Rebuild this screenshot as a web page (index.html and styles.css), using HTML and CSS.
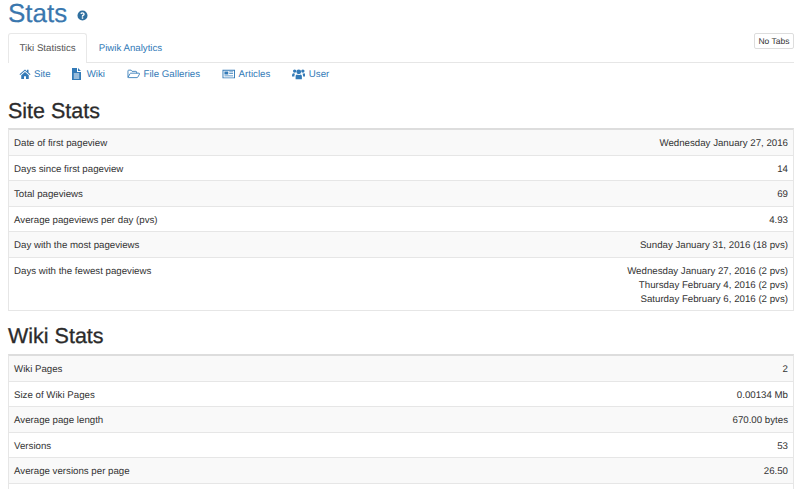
FILE: index.html
```html
<!DOCTYPE html>
<html lang="en">
<head>
<meta charset="utf-8">
<title>Stats</title>
<link rel="stylesheet" href="styles.css">
</head>
<body>
<div class="page">
  <h1 class="title">Stats
    <svg class="help" viewBox="0 0 24 24" aria-hidden="true"><path fill-rule="evenodd" d="M12 1a11 11 0 1 0 0 22 11 11 0 0 0 0-22zm-.1 3.8c2.700 0 4.900 1.700 4.900 4.200 0 2-1.200 2.900-2.400 3.600-.8.500-1 .8-1 1.400v.5h-3v-.8c0-1.600.8-2.400 1.900-3.100.9-.6 1.400-.9 1.400-1.600 0-.8-.7-1.300-1.700-1.300-1.100 0-1.800.6-2.300 1.600L7.100 7.200c.9-1.500 2.500-2.400 4.800-2.400zM10.400 16h3.200v3.100h-3.200z"/></svg>
  </h1>
  <div class="tabs">
    <a class="tab active">Tiki Statistics</a>
    <a class="tab">Piwik Analytics</a>
    <span class="notabs">No Tabs</span>
  </div>
  <nav class="subnav">
    <a class="sublink"><svg class="ico" viewBox="0 0 24 24"><path d="M12 3 1 12.500l1.300 1.500L12 5.700l9.700 8.300 1.300-1.500-4-3.400V3.500h-3v3zM4.500 14.500V22h5.500v-5.500h4V22h5.500v-7.500L12 8z"/></svg>Site</a>
    <a class="sublink"><svg class="ico doc" viewBox="0 0 18 24"><path fill-rule="evenodd" d="M0 0h10v8h8v16H0zM12 0l6 6h-6zM3.500 11v2h11v-2zm0 4v2h11v-2zm0 4v2h11v-2z"/></svg>Wiki</a>
    <a class="sublink"><svg class="ico wide" viewBox="0 0 28 24"><path fill="none" stroke="currentColor" stroke-width="1.800" d="M2 19V5.500c0-.8.600-1.500 1.500-1.500h5l2 2.500h8c.9 0 1.500.7 1.500 1.500v2.500M2 19l4.500-8c.3-.5.800-.7 1.300-.7H25c1 0 1.500 1 1 1.800l-3.700 6.500c-.3.500-.8.900-1.500.900H3c-.6 0-1-.2-1-.5z"/></svg>File Galleries</a>
    <a class="sublink"><svg class="ico wide" viewBox="0 0 28 24"><path fill-rule="evenodd" d="M1 3h26v18H1zm2 2v14h22V5zm2 2h8v6H5zm10 0h8v1.500h-8zm0 3h8v1.500h-8zm-10 5h18v1.500H5z"/></svg>Articles</a>
    <a class="sublink"><svg class="ico wide" viewBox="0 0 28 24"><circle cx="14" cy="7.500" r="5"/><circle cx="5.500" cy="6" r="3.500"/><circle cx="22.500" cy="6" r="3.500"/><path d="M7.500 23v-6c0-2.500 1.500-4 3-4 1 .8 2.200 1.200 3.500 1.200s2.500-.4 3.500-1.200c1.500 0 3 1.500 3 4v6zM0 17c0-4 1-6.500 3-6.500.8.600 2 1 3.500.8-1 1-1.500 3-1.500 5.700H0zM28 17c0-4-1-6.500-3-6.500-.8.600-2 1-3.500.8 1 1 1.500 3 1.500 5.700H28z"/></svg>User</a>
  </nav>

  <h2 class="section">Site Stats</h2>
  <div class="table">
    <div class="row odd"><span>Date of first pageview</span><span>Wednesday January 27, 2016</span></div>
    <div class="row"><span>Days since first pageview</span><span>14</span></div>
    <div class="row odd"><span>Total pageviews</span><span>69</span></div>
    <div class="row"><span>Average pageviews per day (pvs)</span><span>4.93</span></div>
    <div class="row odd"><span>Day with the most pageviews</span><span>Sunday January 31, 2016 (18 pvs)</span></div>
    <div class="row tall"><span>Days with the fewest pageviews</span><span class="multi">Wednesday January 27, 2016 (2 pvs)<br>Thursday February 4, 2016 (2 pvs)<br>Saturday February 6, 2016 (2 pvs)</span></div>
  </div>

  <h2 class="section">Wiki Stats</h2>
  <div class="table">
    <div class="row odd"><span>Wiki Pages</span><span>2</span></div>
    <div class="row"><span>Size of Wiki Pages</span><span>0.00134 Mb</span></div>
    <div class="row odd"><span>Average page length</span><span>670.00 bytes</span></div>
    <div class="row"><span>Versions</span><span>53</span></div>
    <div class="row odd"><span>Average versions per page</span><span>26.50</span></div>
    <div class="row"><span>&nbsp;</span><span>&nbsp;</span></div>
  </div>
</div>
</body>
</html>
```
FILE: styles.css
```css
html, body {
  margin: 0;
  height: 100%;
  overflow: hidden;
  background: #fff;
}
body {
  font-family: "Liberation Sans", Arial, sans-serif;
  font-size: 9.700px;
  color: #333;
  text-rendering: geometricPrecision;
}
.page {
  padding: 0 6px 0 8px;
}
.title {
  margin: 0 0 7px;
  height: 26px;
  display: flex;
  align-items: center;
  gap: 10px;
  font-size: 26px;
  font-weight: 400;
  line-height: 26px;
  color: #3a77ae;
  -webkit-text-stroke: 0.2px #3a77ae;
}
.help {
  width: 11px;
  height: 11px;
  fill: #2f6f9f;
  margin-top: 4px;
}
.tabs {
  display: flex;
  align-items: stretch;
  height: 29px;
  border-bottom: 1px solid #e6e6e6;
  position: relative;
}
.tab {
  display: flex;
  align-items: center;
  padding: 0 10.500px;
  color: #337ab7;
  border: 1px solid transparent;
  border-bottom: 0;
}
.tab.active {
  color: #555;
  background: #fff;
  border-color: #e8e8e8;
  border-radius: 3px 3px 0 0;
  margin-bottom: -1px;
}
.notabs {
  position: absolute;
  right: 0;
  top: 0;
  padding: 1.500px 3.500px;
  font-size: 8.500px;
  line-height: 11px;
  color: #333;
  border: 1px solid #ddd;
  border-radius: 2px;
  background: #fff;
}
.subnav {
  display: flex;
  height: 22px;
  padding-left: 10.500px;
  gap: 21.500px;
  align-items: center;
}
.sublink {
  display: flex;
  align-items: center;
  gap: 3.500px;
  color: #337ab7;
}
.ico {
  width: 12px;
  height: 12px;
  fill: #337ab7;
}
.ico.doc {
  width: 9px;
  height: 12px;
  margin-right: 2px;
}
.ico.wide {
  width: 13.500px;
}
.section {
  margin: 0;
  height: 43px;
  padding-top: 9px;
  box-sizing: border-box;
  display: flex;
  align-items: center;
  font-size: 21.500px;
  font-weight: 400;
  color: #2b2b2b;
  -webkit-text-stroke: 0.3px #2b2b2b;
}
.table + .section {
  padding-top: 7px;
}
.table {
  border: 1px solid #e6e6e6;
  border-top: 2px solid #ddd;
  color: #333;
}
.row {
  display: flex;
  justify-content: space-between;
  padding: 7px 5px 0;
  height: 25.500px;
  line-height: 14px;
  box-sizing: border-box;
  border-bottom: 1px solid #e6e6e6;
}
.row:last-child {
  border-bottom: 0;
}
.row.odd {
  background: #f9f9f9;
}
.multi {
  text-align: right;
  display: block;
}
.row.tall {
  height: 52.500px;
}
```
